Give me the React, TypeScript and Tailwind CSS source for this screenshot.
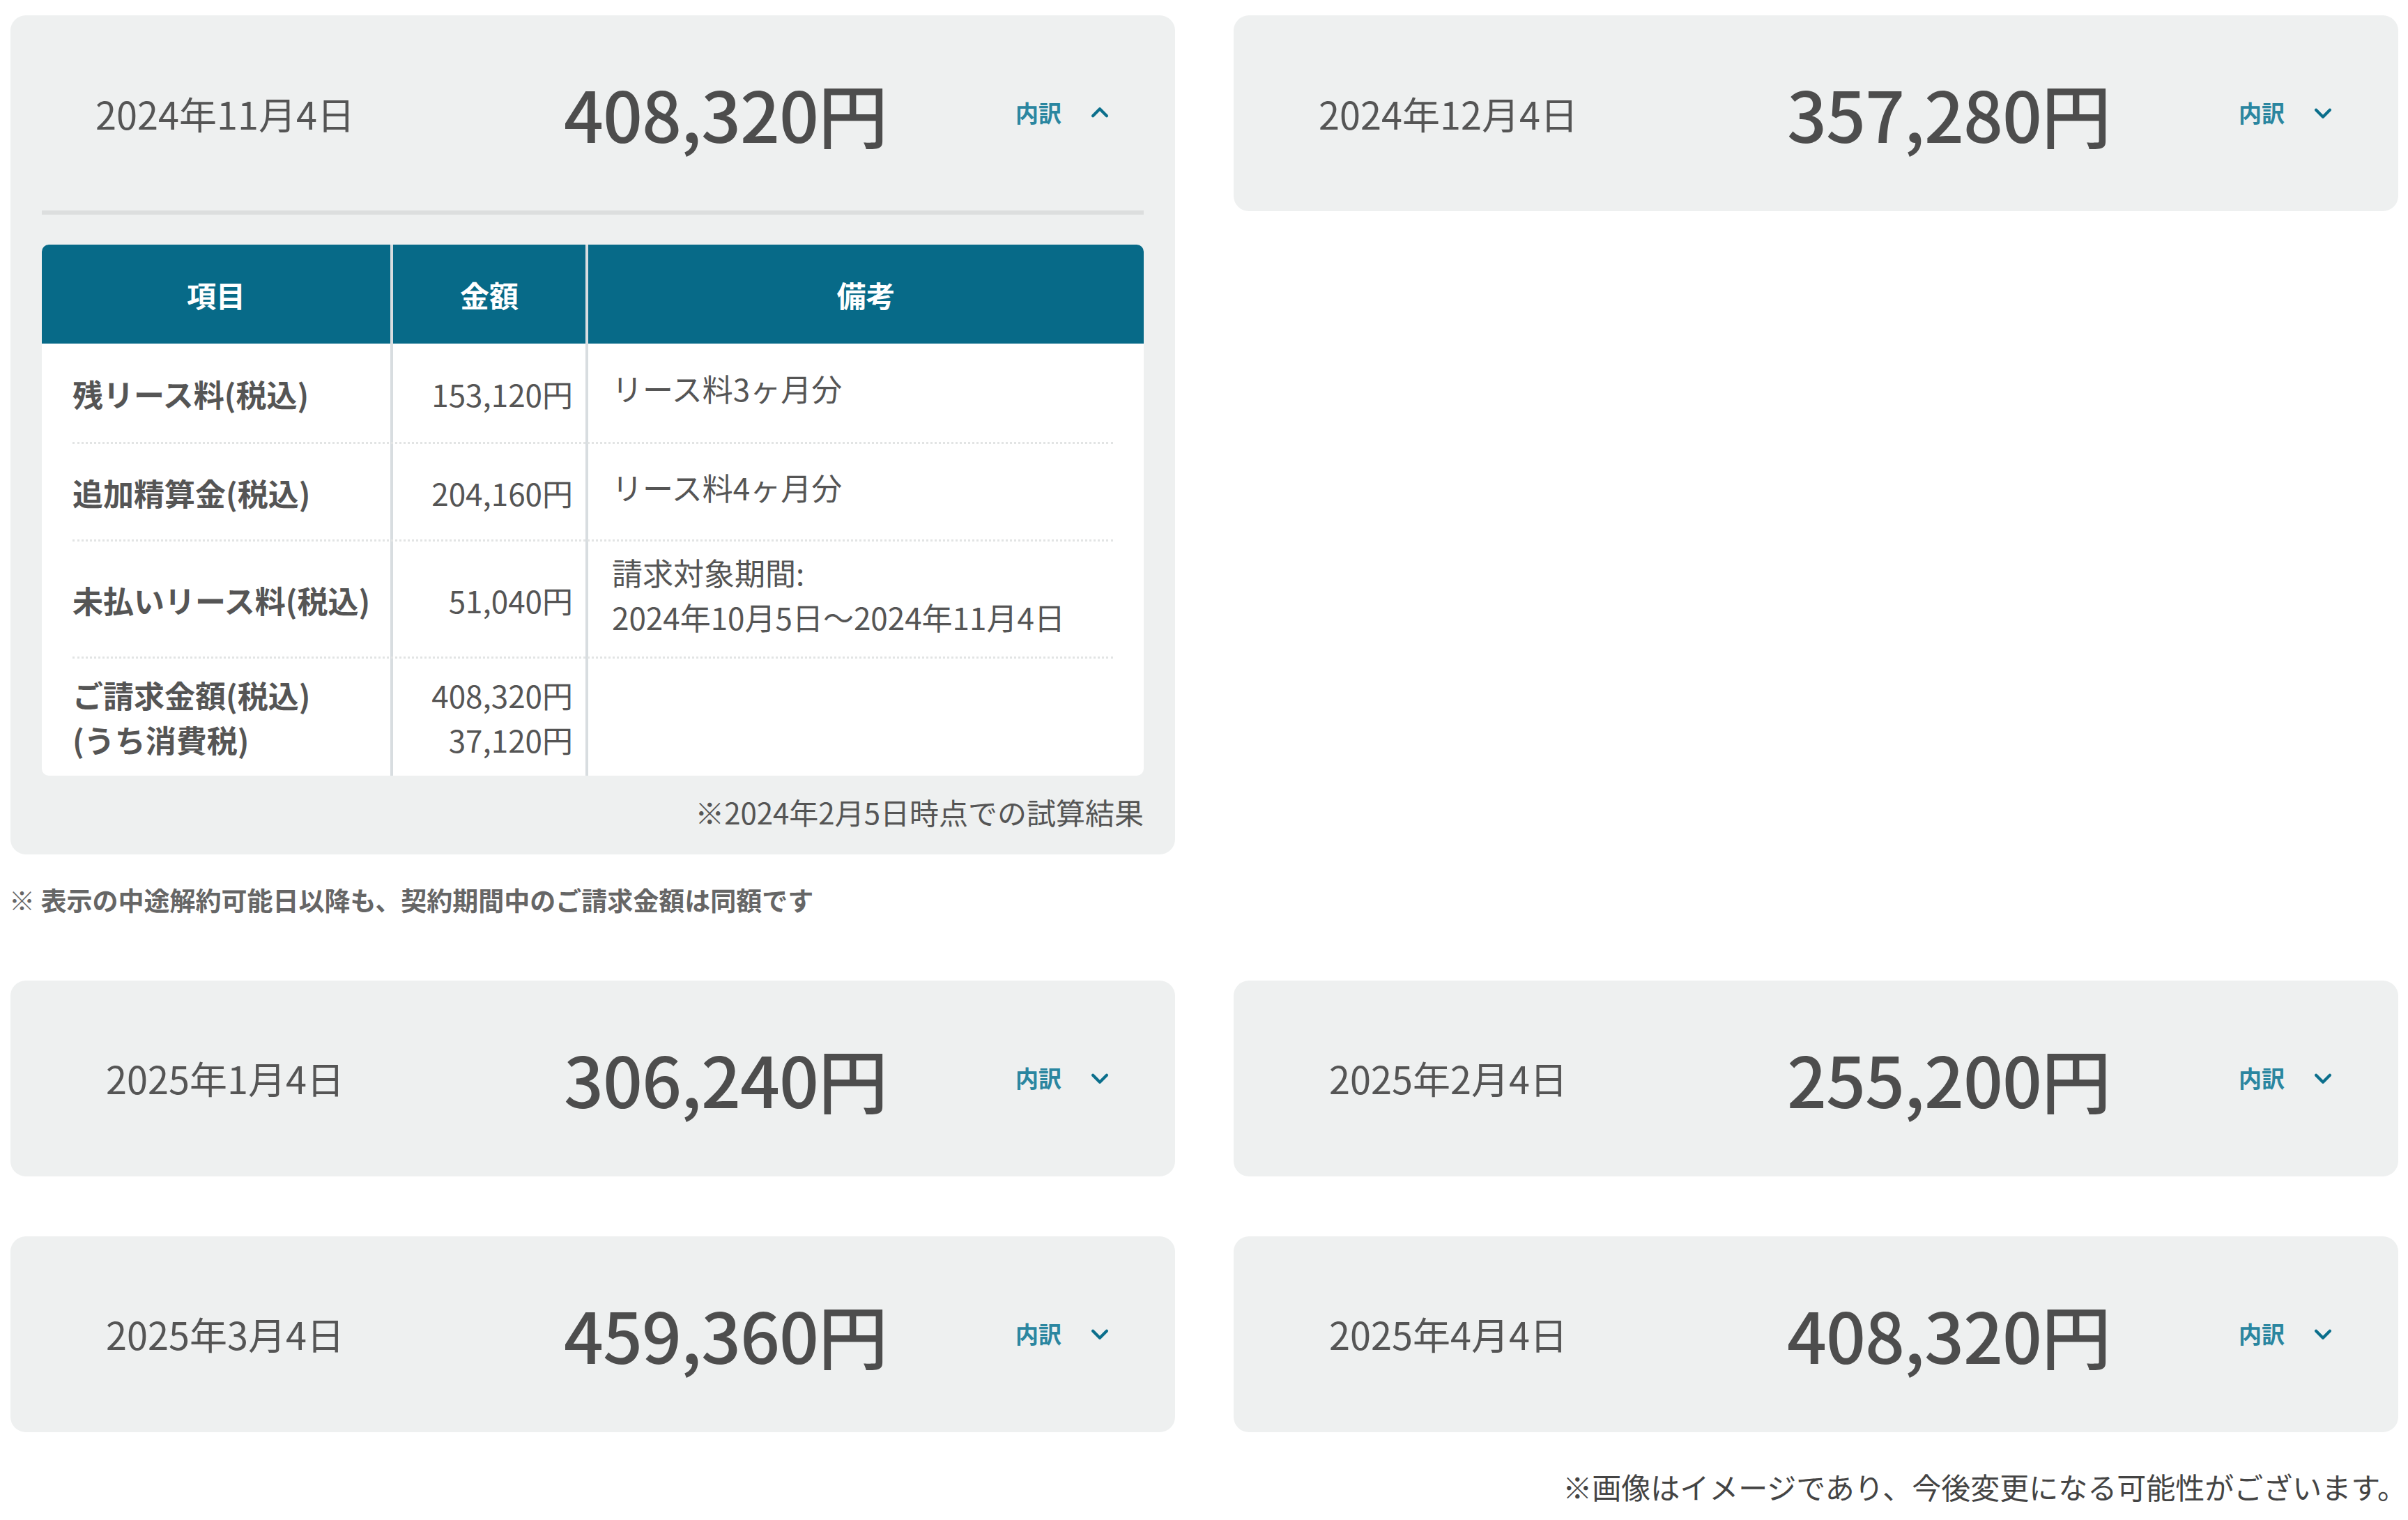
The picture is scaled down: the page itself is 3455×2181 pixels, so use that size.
const font = { fontFamily: '"Noto Sans CJK JP", "Noto Sans", sans-serif' };

type Item = { date: string; amount: string };

function Chevron({ up }: { up?: boolean }) {
  return (
    <svg width="34" height="34" viewBox="0 0 24 24" fill="none" stroke="#0b6f8c" strokeWidth="3" strokeLinecap="round" strokeLinejoin="round">
      {up ? <path d="M5 15l7-7 7 7" /> : <path d="M5 9l7 7 7-7" />}
    </svg>
  );
}

function Header({ date, amount, open }: Item & { open?: boolean }) {
  return (
    <div className="flex items-center h-[280px]">
      <div className="w-[526px] ml-[45px] text-center text-[54px] text-[#555]">{date}</div>
      <div className="w-[656px] ml-[127px] text-center text-[100px] font-medium text-[#4d4d4d] tracking-[-1px]">{amount}</div>
      <div className="ml-[88px] flex items-center">
        <span className="text-[33px] font-bold text-[#2a86a0]">内訳</span>
        <span className="ml-[38px] flex"><Chevron up={open} /></span>
      </div>
    </div>
  );
}

function Card({ date, amount }: Item) {
  return (
    <div className="w-[1671px] h-[281px] rounded-[22px] bg-[#eef0f0]">
      <Header date={date} amount={amount} />
    </div>
  );
}

const rows = [
  { h: "h-[144px]", a: ["残リース料(税込)"], b: ["153,120円"], c: ["リース料3ヶ月分"] },
  { h: "h-[140px]", a: ["追加精算金(税込)"], b: ["204,160円"], c: ["リース料4ヶ月分"] },
  { h: "h-[168px]", a: ["未払いリース料(税込)"], b: ["51,040円"], c: ["請求対象期間:", "2024年10月5日〜2024年11月4日"] },
  { h: "h-[168px]", a: ["ご請求金額(税込)", "(うち消費税)"], b: ["408,320円", "37,120円"], c: [] },
];

export default function App() {
  return (
    <div style={font} className="w-[3455px] h-[2181px] bg-white relative">
      <div className="flex gap-[84px] pl-[15px] pt-[22px]">
        <div>
          <div className="w-[1671px] rounded-[22px] bg-[#eef0f0] pb-[30px]">
            <Header date="2024年11月4日" amount="408,320円" open />
            <div className="mx-[45px] h-[6px] bg-[#dcdede]" />
            <div className="mx-[45px] mt-[43px] rounded-[10px] overflow-hidden bg-white">
              <div className="grid grid-cols-[500px_280px_1fr] h-[142px] bg-[#076a88] text-white text-[42px] font-bold">
                <div className="flex items-center justify-center">項目</div>
                <div className="flex items-center justify-center border-l-[4px] border-[#d8dde0]">金額</div>
                <div className="flex items-center justify-center border-l-[4px] border-[#d8dde0]">備考</div>
              </div>
              {rows.map((r, i) => (
                <div key={i} className={`relative grid grid-cols-[500px_280px_1fr] ${r.h} text-[44px] text-[#555] leading-[64px]`}>
                  <div className="flex flex-col justify-center pl-[44px] font-bold">
                    {r.a.map((t) => <div key={t}>{t}</div>)}
                  </div>
                  <div className="flex flex-col justify-center items-end pr-[18px] border-l-[4px] border-[#d8dde0]">
                    {r.b.map((t) => <div key={t}>{t}</div>)}
                  </div>
                  <div className="flex flex-col justify-center pl-[34px] pb-[16px] border-l-[4px] border-[#d8dde0]">
                    {r.c.map((t) => <div key={t}>{t}</div>)}
                  </div>
                  {i < 3 && <div className="absolute left-[44px] right-[44px] bottom-0 border-t-[3px] border-dotted border-[#e2e4e4]" />}
                </div>
              ))}
            </div>
            <div className="mx-[45px] mt-[20px] text-right text-[42px] text-[#555]">※2024年2月5日時点での試算結果</div>
          </div>
          <div className="mt-[38px] -ml-[2px] text-[37px] font-bold text-[#666]">※ 表示の中途解約可能日以降も、契約期間中のご請求金額は同額です</div>
        </div>
        <div>
          <Card date="2024年12月4日" amount="357,280円" />
        </div>
      </div>
      <div className="grid grid-cols-[1671px_1671px] gap-x-[84px] gap-y-[86px] pl-[15px] mt-[87px]">
        <Card date="2025年1月4日" amount="306,240円" />
        <Card date="2025年2月4日" amount="255,200円" />
        <Card date="2025年3月4日" amount="459,360円" />
        <Card date="2025年4月4日" amount="408,320円" />
      </div>
      <div className="mt-[46px] pr-[2px] text-right text-[42px] text-[#444]">※画像はイメージであり、今後変更になる可能性がございます。</div>
    </div>
  );
}
